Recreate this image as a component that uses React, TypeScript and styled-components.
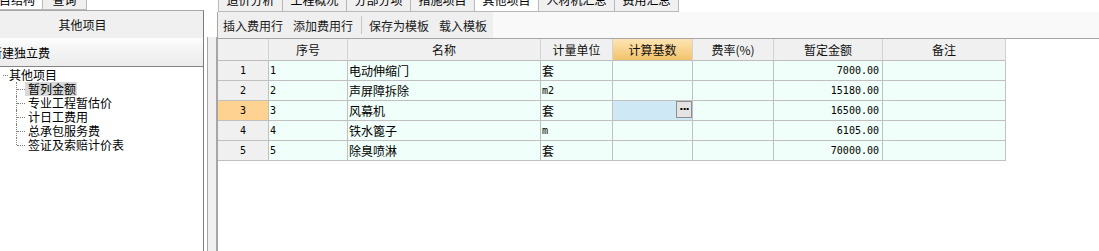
import * as React from 'react';
import styled, { createGlobalStyle } from 'styled-components';

const GlobalStyle = createGlobalStyle`
  html, body {
    margin: 0;
    padding: 0;
    background: #fff;
    overflow: hidden;
  }
  body {
    font-family: "Noto Sans CJK SC", "Liberation Sans", sans-serif;
    font-size: 12px;
    color: #000;
  }
  * { box-sizing: border-box; }
`;

const Page = styled.div`
  display: flex;
  width: 1099px;
  height: 251px;
  overflow: hidden;
  background: #fff;
`;

const LeftPane = styled.div`
  flex: none;
  width: 242px;
  margin-left: -38px;
  display: flex;
  flex-direction: column;
`;

const TabStrip = styled.div<{ $height: number }>`
  display: flex;
  flex: none;
  height: ${p => p.$height}px;
  margin-top: -11px;
  padding-left: 1px;
`;

const Tab = styled.div<{ $active?: boolean; $pad: string }>`
  height: 100%;
  padding: 0 ${p => p.$pad};
  line-height: 22px;
  white-space: nowrap;
  background: ${p => (p.$active ? '#fff' : '#f0f0f0')};
  border: 1px solid #b9b9b9;
  border-left: none;
  border-top: none;
  color: #000;

  &:first-child {
    border-left: 1px solid #b9b9b9;
  }
`;

const PanelBody = styled.div`
  flex: 1;
  display: flex;
  flex-direction: column;
  border-top: 1px solid #a8a8a8;
  border-right: 1px solid #7c7c7c;
`;

const PanelHeader = styled.div`
  height: 27px;
  display: flex;
  align-items: center;
  justify-content: center;
  background: #f0f0f0;
  font-size: 12px;
  color: #111;
`;

const NewButtonRow = styled.div`
  height: 28px;
  display: flex;
  align-items: center;
  padding-left: 28px;
  background: linear-gradient(#fefefe, #f4f4f4 40%, #ececec);
  color: #000;
`;

const TreeBox = styled.div`
  flex: 1;
  background: #fff;
  border-top: 1px solid #838383;
  padding: 1px 0 0 38px;
`;

const TreeRoot = styled.div`
  position: relative;
  height: 14px;
  line-height: 14px;
  padding-left: 9px;

  &::before {
    content: '';
    position: absolute;
    left: 3px;
    top: 7px;
    width: 5px;
    border-top: 1px dotted #808080;
  }
`;

const TreeChildren = styled.div`
  margin-left: 16px;
`;

const TreeChild = styled.div`
  position: relative;
  height: 14px;
  line-height: 14px;
  padding-left: 9px;

  &::before {
    content: '';
    position: absolute;
    left: 0;
    top: 0;
    bottom: 0;
    border-left: 1px dotted #808080;
  }
  &:last-child::before {
    bottom: 7px;
  }
  &::after {
    content: '';
    position: absolute;
    left: 1px;
    top: 7px;
    width: 8px;
    border-top: 1px dotted #808080;
  }
`;

const TreeLabel = styled.span<{ $selected?: boolean }>`
  display: inline-block;
  height: 14px;
  padding: 0 1px 0 3px;
  background: ${p => (p.$selected ? '#d9d9d9' : 'transparent')};
`;

const Splitter = styled.div`
  flex: none;
  width: 10px;
  margin: 37px 0 0 3px;
  background: #f0f0f0;
  border-left: 1px solid #a6a6a6;
  border-right: 1px solid #a6a6a6;
`;

const RightPane = styled.div`
  flex: 1;
  display: flex;
  flex-direction: column;
  min-width: 0;
`;

const RightBody = styled.div`
  flex: 1;
  display: flex;
  flex-direction: column;
  border-left: 1px solid #a6a6a6;
`;

const ToolbarRow = styled.div`
  flex: none;
  height: 26px;
  display: flex;
  background: #f9f9f9;
`;

const Toolbar = styled.div`
  display: flex;
  align-items: center;
  padding: 0 1px 0 0;
  background: #efefef;
`;

const ToolButton = styled.div`
  padding: 0 5px;
  color: #1a1a1a;
  white-space: nowrap;
`;

const ToolSeparator = styled.div`
  width: 1px;
  height: 18px;
  margin: 0 2px 0 3px;
  background: #c6c6c6;
`;

const GridArea = styled.div`
  flex: 1;
  border-top: 1px solid #a6a6a6;
`;

const COLS = [51, 79, 193, 72, 80, 81, 109, 123];

const Grid = styled.div`
  display: grid;
  grid-template-columns: ${COLS.map(c => `${c}px`).join(' ')};
  width: ${COLS.reduce((a, b) => a + b, 0)}px;
`;

const HeadCell = styled.div<{ $hot?: boolean }>`
  height: 22px;
  display: flex;
  align-items: center;
  justify-content: center;
  background: ${p => (p.$hot ? 'linear-gradient(#fde4b3, #f3c36c)' : '#f0f0f0')};
  border-right: 1px solid #d2d2d2;
  border-bottom: 1px solid #bdbdbd;
  white-space: nowrap;
  color: #111;

  &:last-child {
    border-right-color: #bdbdbd;
  }
`;

const RowHead = styled.div<{ $current?: boolean }>`
  height: 20px;
  display: flex;
  align-items: center;
  justify-content: center;
  background: ${p => (p.$current ? '#fed291' : '#f0f0f0')};
  border-right: 1px solid #c0c0c0;
  border-bottom: 1px solid #c0c0c0;
  font-family: "DejaVu Sans Mono", "Liberation Mono", monospace;
  font-size: 10px;
`;

const Cell = styled.div<{ $align?: 'left' | 'right'; $mono?: boolean }>`
  height: 20px;
  display: flex;
  align-items: center;
  justify-content: ${p => (p.$align === 'right' ? 'flex-end' : 'flex-start')};
  padding: ${p => (p.$align === 'right' ? '0 3px 0 0' : '0 0 0 1px')};
  background: #f0fff9;
  border-right: 1px solid #c0c0c0;
  border-bottom: 1px solid #c0c0c0;
  white-space: nowrap;
  overflow: hidden;
  font-family: ${p =>
    p.$mono
      ? '"DejaVu Sans Mono", "Liberation Mono", monospace'
      : '"Noto Sans CJK SC", "Liberation Sans", sans-serif'};
  font-size: ${p => (p.$mono ? '10px' : '12px')};
`;

const EditCell = styled.div`
  height: 20px;
  display: flex;
  align-items: flex-start;
  justify-content: flex-end;
  background: #cfe8f5;
  border-right: 1px solid #c0c0c0;
  border-bottom: 1px solid #c0c0c0;
`;

const DotsButton = styled.div`
  width: 16px;
  height: 17px;
  display: flex;
  align-items: center;
  justify-content: center;
  background: #e4e4e4;
  border: 1px solid #8e8e8e;
  font-family: "DejaVu Sans", sans-serif;
  font-weight: bold;
  font-size: 11px;
  letter-spacing: -1px;
  line-height: 1;
`;

interface Row {
  no: string;
  name: string;
  unit: string;
  amount: string;
}

const rows: Row[] = [
  { no: '1', name: '电动伸缩门', unit: '套', amount: '7000.00' },
  { no: '2', name: '声屏障拆除', unit: 'm2', amount: '15180.00' },
  { no: '3', name: '风幕机', unit: '套', amount: '16500.00' },
  { no: '4', name: '铁水篦子', unit: 'm', amount: '6105.00' },
  { no: '5', name: '除臭喷淋', unit: '套', amount: '70000.00' },
];

const headers = ['', '序号', '名称', '计量单位', '计算基数', '费率(%)', '暂定金额', '备注'];

const rightTabs = ['造价分析', '工程概况', '分部分项', '措施项目', '其他项目', '人材机汇总', '费用汇总'];

const treeItems = ['暂列金额', '专业工程暂估价', '计日工费用', '总承包服务费', '签证及索赔计价表'];

const CURRENT_ROW = 2;

export default function App() {
  return (
    <>
      <GlobalStyle />
      <Page>
        <LeftPane>
          <TabStrip $height={21}>
            <Tab $active $pad="7px 0 23px">项目结构</Tab>
            <Tab $pad="9.5px">查询</Tab>
          </TabStrip>
          <PanelBody>
            <PanelHeader>其他项目</PanelHeader>
            <NewButtonRow>新建独立费</NewButtonRow>
            <TreeBox>
              <TreeRoot>其他项目</TreeRoot>
              <TreeChildren>
                {treeItems.map((item, i) => (
                  <TreeChild key={item}>
                    <TreeLabel $selected={i === 0}>{item}</TreeLabel>
                  </TreeChild>
                ))}
              </TreeChildren>
            </TreeBox>
          </PanelBody>
        </LeftPane>

        <Splitter />

        <RightPane>
          <TabStrip $height={23}>
            {rightTabs.map(t => (
              <Tab key={t} $pad="7.5px" $active={t === '其他项目'}>
                {t}
              </Tab>
            ))}
          </TabStrip>
          <RightBody>
            <ToolbarRow>
              <Toolbar>
                <ToolButton>插入费用行</ToolButton>
                <ToolButton>添加费用行</ToolButton>
                <ToolSeparator />
                <ToolButton>保存为模板</ToolButton>
                <ToolButton>载入模板</ToolButton>
              </Toolbar>
            </ToolbarRow>
            <GridArea>
              <Grid>
                {headers.map((h, i) => (
                  <HeadCell key={i} $hot={h === '计算基数'}>
                    {h}
                  </HeadCell>
                ))}
                {rows.map((row, i) => (
                  <React.Fragment key={row.no}>
                    <RowHead $current={i === CURRENT_ROW}>{row.no}</RowHead>
                    <Cell $mono>{row.no}</Cell>
                    <Cell>{row.name}</Cell>
                    <Cell $mono={row.unit !== '套'}>{row.unit}</Cell>
                    {i === CURRENT_ROW ? (
                      <EditCell>
                        <DotsButton>···</DotsButton>
                      </EditCell>
                    ) : (
                      <Cell />
                    )}
                    <Cell />
                    <Cell $align="right" $mono>
                      {row.amount}
                    </Cell>
                    <Cell />
                  </React.Fragment>
                ))}
              </Grid>
            </GridArea>
          </RightBody>
        </RightPane>
      </Page>
    </>
  );
}
